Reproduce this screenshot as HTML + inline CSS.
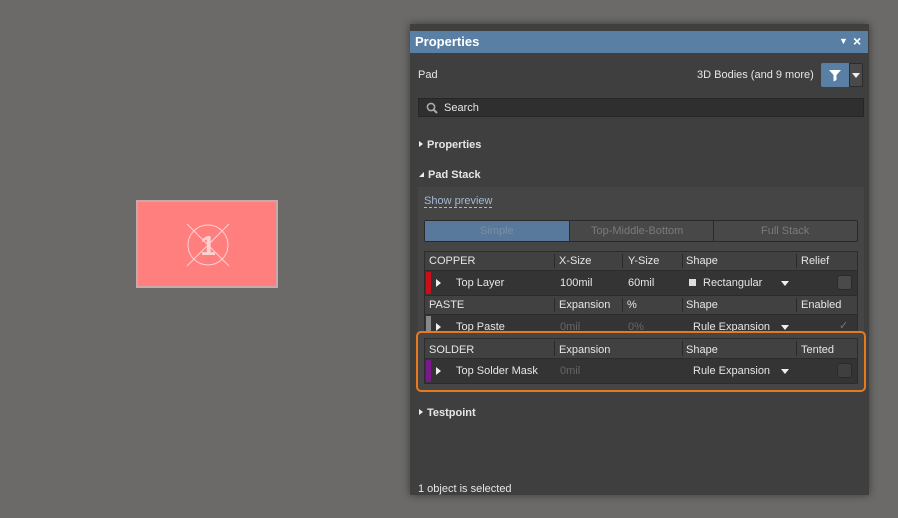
<!DOCTYPE html>
<html><head><style>
body{margin:0;width:898px;height:518px;background:#6b6a68;position:relative;overflow:hidden;font-family:"Liberation Sans",sans-serif;font-size:11px;color:#e6e6e6}
.a{position:absolute;line-height:0}
.panel{left:410px;top:24px;width:459px;height:471px;background:#3f3f3f;box-shadow:0 0 8px rgba(0,0,0,.45)}
.t{position:absolute;white-space:nowrap}
.hd{background:#414141}
.dr{background:#343434}
.sep{position:absolute;top:2px;bottom:2px;width:1px;background:#2a2a2a}
.tri{display:block;width:0;height:0;border-top:4px solid transparent;border-bottom:4px solid transparent;border-left:5px solid #eee}
.dd{display:block;width:0;height:0;border-left:4px solid transparent;border-right:4px solid transparent;border-top:5px solid #eee}
</style></head><body>
<div class="a" style="left:136px;top:200px;width:142px;height:88px;background:#ff7f7f;border:2px solid #c8a8a8;box-sizing:border-box"></div>
<svg class="a" style="left:184px;top:221px" width="48" height="48"><g stroke="#ffd0d0" stroke-width="1" fill="none"><circle cx="24" cy="24" r="20"/><line x1="3" y1="3" x2="45" y2="45"/><line x1="45" y1="3" x2="3" y2="45"/></g><text x="24" y="34" text-anchor="middle" font-family="Liberation Sans" font-weight="bold" font-size="28" fill="#ffd0d0">1</text></svg>

<div class="a panel"></div>
<div class="a" style="left:410px;top:31px;width:458px;height:22px;background:#5a7fa5"></div>
<div class="t" style="left:415px;top:34px;font-size:13px;font-weight:bold;color:#fff">Properties</div>
<div class="t" style="left:839px;top:36px;font-size:9px;color:#fff">▼</div>
<div class="t" style="left:853px;top:33px;font-size:14px;font-weight:bold;color:#fff">×</div>

<div class="t" style="left:418px;top:69px">Pad</div>
<div class="t" style="left:697px;top:69px">3D Bodies (and 9 more)</div>
<div class="a" style="left:821px;top:63px;width:28px;height:24px;background:#5a7fa5;border-radius:2px 0 0 2px"></div>
<svg class="a" style="left:828px;top:68px" width="14" height="14"><path d="M1 2h12l-4.5 5v5l-3 1.5v-6.5z" fill="#fff"/></svg>
<div class="a" style="left:849px;top:63px;width:14px;height:24px;background:#4a4a4a;border-radius:0 2px 2px 0;border:1px solid #2c2c2c;box-sizing:border-box"></div>
<div class="a" style="left:852px;top:73px"><span class="dd"></span></div>

<div class="a" style="left:418px;top:98px;width:446px;height:19px;background:#2f2f2f;border:1px solid #262626;box-sizing:border-box"></div>
<svg class="a" style="left:426px;top:102px" width="12" height="12"><circle cx="5" cy="5" r="3.6" stroke="#aaa" stroke-width="1.6" fill="none"/><line x1="7.5" y1="7.5" x2="11" y2="11" stroke="#aaa" stroke-width="2"/></svg>
<div class="t" style="left:444px;top:102px">Search</div>

<div class="a" style="left:419px;top:141px"><span class="tri" style="border-top-width:3.5px;border-bottom-width:3.5px;border-left-width:4px"></span></div>
<div class="t" style="left:427px;top:139px;font-weight:bold">Properties</div>
<svg class="a" style="left:418px;top:171px" width="7" height="7"><path d="M6 1v5h-5z" fill="#eee"/></svg>
<div class="t" style="left:428px;top:169px;font-weight:bold">Pad Stack</div>

<div class="a" style="left:418px;top:187px;width:446px;height:203px;background:#454545"></div>
<div class="t" style="left:424px;top:195px;color:#a4bad3;border-bottom:1px dashed #a4bad3">Show preview</div>
<div class="a" style="left:424px;top:220px;width:434px;height:22px;background:#484848;border:1px solid #2a2a2a;box-sizing:border-box;border-radius:2px"></div>
<div class="a" style="left:425px;top:221px;width:144px;height:20px;background:#58799b"></div>
<div class="a" style="left:569px;top:221px;width:1px;height:20px;background:#2a2a2a"></div>
<div class="a" style="left:713px;top:221px;width:1px;height:20px;background:#2a2a2a"></div>
<div class="t" style="left:480px;top:225px;color:#7a8ea3">Simple</div>
<div class="t" style="left:591px;top:225px;color:#7a7a7a">Top-Middle-Bottom</div>
<div class="t" style="left:761px;top:225px;color:#7a7a7a">Full Stack</div>

<div class="a" style="left:424px;top:251px;width:434px;height:133px;background:#2c2c2c"></div>
<div class="a hd" style="left:425px;top:252px;width:432px;height:18px"><div class="sep" style="left:129px"></div><div class="sep" style="left:197px"></div><div class="sep" style="left:257px"></div><div class="sep" style="left:371px"></div></div>
<div class="t" style="left:429px;top:255px">COPPER</div><div class="t" style="left:559px;top:255px">X-Size</div><div class="t" style="left:628px;top:255px">Y-Size</div><div class="t" style="left:686px;top:255px">Shape</div><div class="t" style="left:801px;top:255px">Relief</div>
<div class="a dr" style="left:425px;top:271px;width:432px;height:24px"></div>
<div class="a" style="left:426px;top:272px;width:5px;height:22px;background:#c8101a"></div>
<div class="a" style="left:436px;top:279px"><span class="tri"></span></div>
<div class="t" style="left:456px;top:277px">Top Layer</div><div class="t" style="left:560px;top:277px">100mil</div><div class="t" style="left:628px;top:277px">60mil</div>
<div class="a" style="left:689px;top:279px;width:7px;height:7px;background:#ddd"></div>
<div class="t" style="left:703px;top:277px">Rectangular</div><div class="a" style="left:781px;top:281px"><span class="dd"></span></div>
<div class="a" style="left:837px;top:275px;width:15px;height:15px;background:#4a4a4a;border:1px solid #2a2a2a;border-radius:3px;box-sizing:border-box"></div>
<div class="a hd" style="left:425px;top:296px;width:432px;height:18px"><div class="sep" style="left:129px"></div><div class="sep" style="left:197px"></div><div class="sep" style="left:257px"></div><div class="sep" style="left:371px"></div></div>
<div class="t" style="left:429px;top:299px">PASTE</div><div class="t" style="left:559px;top:299px">Expansion</div><div class="t" style="left:627px;top:299px">%</div><div class="t" style="left:686px;top:299px">Shape</div><div class="t" style="left:801px;top:299px">Enabled</div>
<div class="a dr" style="left:425px;top:315px;width:432px;height:22px;overflow:hidden">
<div class="a" style="left:1px;top:1px;width:5px;height:20px;background:#888"></div>
<div class="a" style="left:11px;top:8px"><span class="tri"></span></div>
<div class="t" style="left:31px;top:6px;line-height:normal">Top Paste</div><div class="t" style="left:135px;top:6px;color:#666;line-height:normal">0mil</div><div class="t" style="left:203px;top:6px;color:#666;line-height:normal">0%</div>
<div class="t" style="left:268px;top:6px;line-height:normal">Rule Expansion</div><div class="a" style="left:356px;top:10px"><span class="dd"></span></div>
<div class="t" style="left:414px;top:4px;color:#777;line-height:normal">✓</div></div>
<div class="a" style="left:417px;top:332px;width:448px;height:58px;background:#454545"></div>
<div class="a" style="left:424px;top:338px;width:434px;height:46px;background:#2c2c2c"></div>
<div class="a hd" style="left:425px;top:339px;width:432px;height:19px"><div class="sep" style="left:129px"></div><div class="sep" style="left:257px"></div><div class="sep" style="left:371px"></div></div>
<div class="t" style="left:429px;top:344px">SOLDER</div><div class="t" style="left:559px;top:344px">Expansion</div><div class="t" style="left:686px;top:344px">Shape</div><div class="t" style="left:801px;top:344px">Tented</div>
<div class="a dr" style="left:425px;top:359px;width:432px;height:24px"></div>
<div class="a" style="left:426px;top:360px;width:5px;height:22px;background:#7a1a8a"></div>
<div class="a" style="left:436px;top:367px"><span class="tri"></span></div>
<div class="t" style="left:456px;top:365px">Top Solder Mask</div><div class="t" style="left:560px;top:365px;color:#666">0mil</div>
<div class="t" style="left:693px;top:365px">Rule Expansion</div><div class="a" style="left:781px;top:369px"><span class="dd"></span></div>
<div class="a" style="left:837px;top:363px;width:15px;height:15px;background:#3f3f3f;border:1px solid #2a2a2a;border-radius:3px;box-sizing:border-box"></div>
<div class="a" style="left:416px;top:331px;width:450px;height:61px;border:2px solid #e8791d;border-radius:5px;box-sizing:border-box"></div>

<div class="a" style="left:419px;top:409px"><span class="tri" style="border-top-width:3.5px;border-bottom-width:3.5px;border-left-width:4px"></span></div>
<div class="t" style="left:427px;top:407px;font-weight:bold">Testpoint</div>
<div class="t" style="left:418px;top:483px">1 object is selected</div>
</body></html>
